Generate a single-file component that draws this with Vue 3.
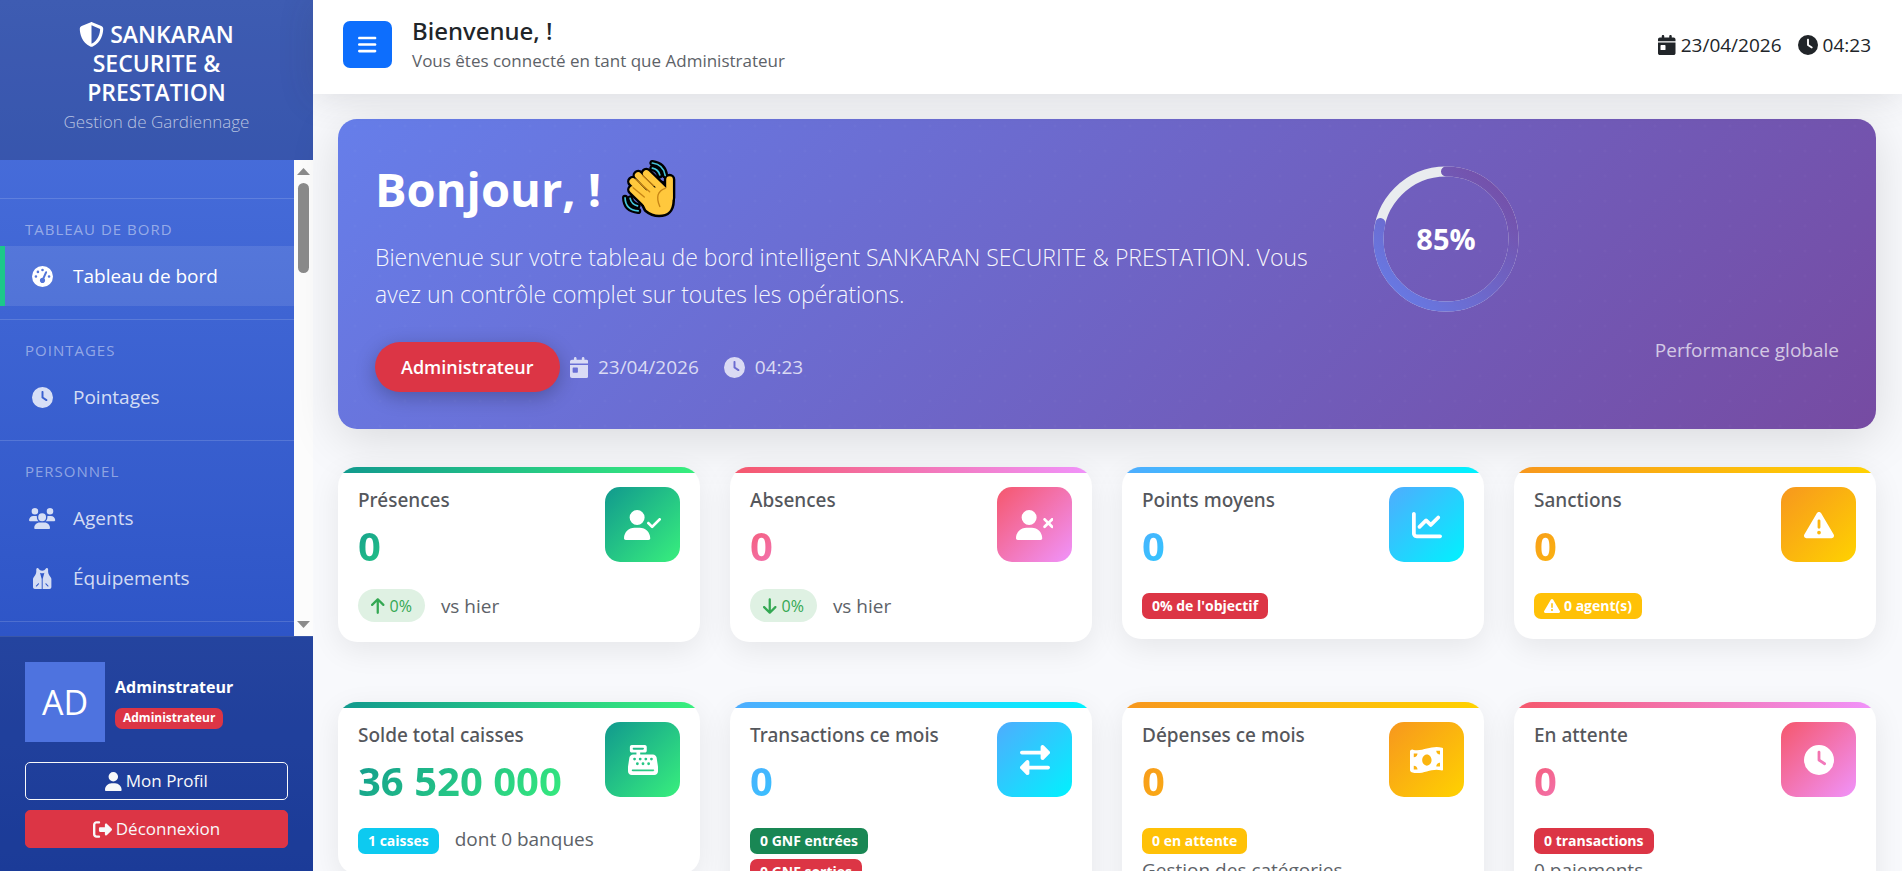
<script setup>
import { h } from 'vue'

const body = 'M96 128a128 128 0 1 1 256 0A128 128 0 1 1 96 128zM0 482.3C0 383.8 79.8 304 178.3 304h91.4C368.2 304 448 383.8 448 482.3c0 16.4-13.3 29.7-29.7 29.7H29.7C13.3 512 0 498.7 0 482.3z'
const dot = (x, y, r) => `M${x - r} ${y}a${r} ${r} 0 1 0 ${2 * r} 0a${r} ${r} 0 1 0 ${-2 * r} 0z`

const icons = {
  shield: [512, 'M256 0c4.6 0 9.2 1 13.4 2.9L457.7 82.8c22 9.3 38.4 31 38.3 57.2c-.5 99.2-41.3 280.7-213.6 363.2c-16.7 8-36.1 8-52.8 0C57.3 420.7 16.5 239.2 16 140c-.1-26.2 16.3-47.9 38.3-57.2L242.7 2.9C246.8 1 251.4 0 256 0zm0 66.8V444.8C394 378 431.1 230.1 432 141.4L256 66.8z'],
  gauge: [512, 'M0 256a256 256 0 1 1 512 0A256 256 0 1 1 0 256zM288 96a32 32 0 1 0 -64 0 32 32 0 1 0 64 0zM256 416c35.3 0 64-28.7 64-64c0-17.4-6.9-33.1-18.1-44.6L366 161.7c5.3-12.1-.2-26.3-12.3-31.6s-26.3 .2-31.6 12.3L257.9 288c-.6 0-1.3 0-1.9 0c-35.3 0-64 28.7-64 64s28.7 64 64 64zM176 144a32 32 0 1 0 -64 0 32 32 0 1 0 64 0zM96 288a32 32 0 1 0 0-64 32 32 0 1 0 0 64zm352-32a32 32 0 1 0 -64 0 32 32 0 1 0 64 0z'],
  clock: [512, 'M256 0a256 256 0 1 1 0 512A256 256 0 1 1 256 0zM232 120V256c0 8 4 15.5 10.7 20l96 64c11 7.4 25.9 4.4 33.3-6.7s4.4-25.9-6.7-33.3L280 243.2V120c0-13.3-10.7-24-24-24s-24 10.7-24 24z'],
  users: [640, 'M144 0a80 80 0 1 1 0 160A80 80 0 1 1 144 0zM512 0a80 80 0 1 1 0 160A80 80 0 1 1 512 0zM0 298.7C0 239.8 47.8 192 106.7 192h42.7c15.9 0 31 3.5 44.6 9.7c-1.3 7.2-1.9 14.7-1.9 22.3c0 38.2 16.8 72.5 43.3 96c-.2 0-.4 0-.7 0H21.3C9.6 320 0 310.4 0 298.7zM405.3 320c-.2 0-.4 0-.7 0c26.6-23.5 43.3-57.8 43.3-96c0-7.6-.7-15-1.9-22.3c13.6-6.3 28.7-9.7 44.6-9.7h42.7C592.2 192 640 239.8 640 298.7c0 11.8-9.6 21.3-21.3 21.3H405.3zM224 224a96 96 0 1 1 192 0 96 96 0 1 1 -192 0zM128 485.3C128 411.7 187.7 352 261.3 352H378.7C452.3 352 512 411.7 512 485.3c0 14.7-11.9 26.7-26.7 26.7H154.7c-14.7 0-26.7-11.9-26.7-26.7z'],
  vest: [448, 'M112 0c12 0 20 6 26 16c18 30 48 48 86 48s68-18 86-48c6-10 14-16 26-16c18 0 32 14 32 32v62c0 28 8 52 24 76l46 70c7 10 10 20 10 32v192c0 27-21 48-48 48H236V270l42-156c-16 9-34 14-54 14s-38-5-54-14l42 156v242H48c-27 0-48-21-48-48V272c0-12 3-22 10-32l46-70c16-24 24-48 24-76V32c0-18 14-32 32-32zM124 378l-52 52c-12 12 6 30 18 18l52-52c12-12-6-30-18-18zM324 378c-12-12-30 6-18 18l52 52c12 12 30-6 18-18z'],
  user: [448, 'M224 256A128 128 0 1 0 224 0a128 128 0 1 0 0 256zm-45.7 48C79.8 304 0 383.8 0 482.3C0 498.7 13.3 512 29.7 512H418.3c16.4 0 29.7-13.3 29.7-29.7C448 383.8 368.2 304 269.7 304H178.3z'],
  logout: [512, 'M377.9 105.9L500.7 228.7c7.2 7.2 11.3 17.1 11.3 27.3s-4.1 20.1-11.3 27.3L377.9 406.1c-6.4 6.4-15 9.9-24 9.9c-18.7 0-33.9-15.2-33.9-33.9l0-62.1-128 0c-17.7 0-32-14.3-32-32l0-64c0-17.7 14.3-32 32-32l128 0 0-62.1c0-18.7 15.2-33.9 33.9-33.9c9 0 17.6 3.6 24 9.9zM160 96L96 96c-17.7 0-32 14.3-32 32l0 256c0 17.7 14.3 32 32 32l64 0c17.7 0 32 14.3 32 32s-14.3 32-32 32l-64 0c-53 0-96-43-96-96L0 128C0 75 43 32 96 32l64 0c17.7 0 32 14.3 32 32s-14.3 32-32 32z'],
  bars: [448, 'M0 96C0 78.3 14.3 64 32 64H416c17.7 0 32 14.3 32 32s-14.3 32-32 32H32C14.3 128 0 113.7 0 96zM0 256c0-17.7 14.3-32 32-32H416c17.7 0 32 14.3 32 32s-14.3 32-32 32H32c-17.7 0-32-14.3-32-32zM448 416c0 17.7-14.3 32-32 32H32c-17.7 0-32-14.3-32-32s14.3-32 32-32H416c17.7 0 32 14.3 32 32z'],
  calendar: [448, 'M128 0c17.7 0 32 14.3 32 32V64H288V32c0-17.7 14.3-32 32-32s32 14.3 32 32V64h48c26.5 0 48 21.5 48 48v48H0V112C0 85.5 21.5 64 48 64H96V32c0-17.7 14.3-32 32-32zM0 192H448V464c0 26.5-21.5 48-48 48H48c-26.5 0-48-21.5-48-48V192zm80 64c-8.8 0-16 7.2-16 16v96c0 8.8 7.2 16 16 16h96c8.8 0 16-7.2 16-16V272c0-8.8-7.2-16-16-16H80z'],
  userCheck: [640, body + 'M625 177L497 305c-9.4 9.4-24.6 9.4-33.9 0l-64-64c-9.4-9.4-9.4-24.6 0-33.9s24.6-9.4 33.9 0l47 47L591 143c9.4-9.4 24.6-9.4 33.9 0s9.4 24.6 0 33.9z'],
  userTimes: [640, body + 'M471 143c9.4-9.4 24.6-9.4 33.9 0l47 47 47-47c9.4-9.4 24.6-9.4 33.9 0s9.4 24.6 0 33.9l-47 47 47 47c9.4 9.4 9.4 24.6 0 33.9s-24.6 9.4-33.9 0l-47-47-47 47c-9.4 9.4-24.6 9.4-33.9 0s-9.4-24.6 0-33.9l47-47-47-47c-9.4-9.4-9.4-24.6 0-33.9z'],
  chart: [512, 'M64 64c0-17.7-14.3-32-32-32S0 46.3 0 64V400c0 44.2 35.8 80 80 80H480c17.7 0 32-14.3 32-32s-14.3-32-32-32H80c-8.8 0-16-7.2-16-16V64zm406.6 86.6c12.5-12.5 12.5-32.8 0-45.3s-32.8-12.5-45.3 0L320 210.7l-57.4-57.4c-12.5-12.5-32.8-12.5-45.3 0l-112 112c-12.5 12.5-12.5 32.8 0 45.3s32.8 12.5 45.3 0L240 221.3l57.4 57.4c12.5 12.5 32.8 12.5 45.3 0l128-128z'],
  warning: [512, 'M256 32c14.2 0 27.3 7.5 34.5 19.8l216 368c7.3 12.4 7.3 27.7 .2 40.1S486.3 480 472 480H40c-14.3 0-27.6-7.7-34.7-20.1s-7-27.8 .2-40.1l216-368C228.7 39.5 241.8 32 256 32zm0 128c-13.3 0-24 10.7-24 24V296c0 13.3 10.7 24 24 24s24-10.7 24-24V184c0-13.3-10.7-24-24-24zm32 224a32 32 0 1 0 -64 0 32 32 0 1 0 64 0z'],
  register: [512, 'M64 0C46.3 0 32 14.3 32 32V96c0 17.7 14.3 32 32 32h80v32H87c-31.6 0-58.5 23.1-63.3 54.4L1.1 364.1C.4 368.8 0 373.6 0 378.4V448c0 35.3 28.7 64 64 64H448c35.3 0 64-28.7 64-64V378.4c0-4.8-.4-9.6-1.1-14.4L488.2 214.4C483.5 183.1 456.6 160 425 160H208V128h80c17.7 0 32-14.3 32-32V32c0-17.7-14.3-32-32-32H64zM96 48H256c8.8 0 16 7.2 16 16s-7.2 16-16 16H96c-8.8 0-16-7.2-16-16s7.2-16 16-16zM64 432c0-8.8 7.2-16 16-16H432c8.8 0 16 7.2 16 16s-7.2 16-16 16H80c-8.8 0-16-7.2-16-16z' + [112, 208, 304, 400].map((x) => dot(x, 240, 24)).join('') + [160, 256, 352].map((x) => dot(x, 320, 24)).join('')],
  exchange: [512, 'M32 96l320 0V32c0-12.9 7.8-24.6 19.8-29.6s25.7-2.2 34.9 6.9l96 96c6 6 9.4 14.1 9.4 22.6s-3.4 16.6-9.4 22.6l-96 96c-9.2 9.2-22.9 11.9-34.9 6.9s-19.8-16.6-19.8-29.6V160L32 160c-17.7 0-32-14.3-32-32s14.3-32 32-32zM480 352c17.7 0 32 14.3 32 32s-14.3 32-32 32H160v64c0 12.9-7.8 24.6-19.8 29.6s-25.7 2.2-34.9-6.9l-96-96c-6-6-9.4-14.1-9.4-22.6s3.4-16.6 9.4-22.6l96-96c9.2-9.2 22.9-11.9 34.9-6.9s19.8 16.6 19.8 29.6l0 64H480z'],
  money: [576, 'M0 112.5V422.3c0 18 10.1 35 27 41.3c87 32.5 174 10.3 261-11.9c79.8-20.3 159.6-40.7 239.3-18.9c23 6.3 48.7-9.5 48.7-33.4V89.7c0-18-10.1-35-27-41.3C462 15.9 375 38.1 288 60.3C208.2 80.6 128.4 100.9 48.7 79.1C25.6 72.8 0 88.6 0 112.5zM288 352c-44.2 0-80-43-80-96s35.8-96 80-96s80 43 80 96s-35.8 96-80 96zM64 352c35.3 0 64 28.7 64 64H64V352zm64-208c0 35.3-28.7 64-64 64V144h64zM512 304v64H448c0-35.3 28.7-64 64-64zM448 96h64v64c-35.3 0-64-28.7-64-64z'],
  arrowUp: [384, 'M214.6 41.4c-12.5-12.5-32.8-12.5-45.3 0l-160 160c-12.5 12.5-12.5 32.8 0 45.3s32.8 12.5 45.3 0L160 141.2V448c0 17.7 14.3 32 32 32s32-14.3 32-32V141.2L329.4 246.6c12.5 12.5 32.8 12.5 45.3 0s12.5-32.8 0-45.3l-160-160z'],
  arrowDown: [384, 'M169.4 470.6c12.5 12.5 32.8 12.5 45.3 0l160-160c12.5-12.5 12.5-32.8 0-45.3s-32.8-12.5-45.3 0L224 370.8V64c0-17.7-14.3-32-32-32s-32 14.3-32 32V370.8L54.6 265.4c-12.5-12.5-32.8-12.5-45.3 0s-12.5 32.8 0 45.3l160 160z'],
}

const Icon = ({ name }) => {
  const [width, d] = icons[name]
  return h('svg', { viewBox: `0 0 ${width} 512`, width: `${width / 512}em`, height: '1em', fill: 'currentColor', 'aria-hidden': 'true' }, [
    h('path', { d, 'fill-rule': 'evenodd' }),
  ])
}
Icon.props = ['name']

const today = '23/04/2026'
const now = '04:23'
const progress = 267

const sections = [
  { title: 'TABLEAU DE BORD', items: [{ label: 'Tableau de bord', icon: 'gauge', active: true }] },
  { title: 'POINTAGES', items: [{ label: 'Pointages', icon: 'clock' }] },
  { title: 'PERSONNEL', items: [{ label: 'Agents', icon: 'users' }, { label: 'Équipements', icon: 'vest' }] },
]

const cards = [
  { title: 'Présences', value: '0', tone: 'green', icon: 'userCheck', lines: [{ trend: '0%', icon: 'arrowUp', text: 'vs hier' }] },
  { title: 'Absences', value: '0', tone: 'pink', icon: 'userTimes', lines: [{ trend: '0%', icon: 'arrowDown', text: 'vs hier' }] },
  { title: 'Points moyens', value: '0', tone: 'blue', icon: 'chart', lines: [{ badge: "0% de l'objectif", color: 'danger' }] },
  { title: 'Sanctions', value: '0', tone: 'orange', icon: 'warning', lines: [{ badge: '0 agent(s)', color: 'warning', badgeIcon: 'warning' }] },
  { title: 'Solde total caisses', value: '36 520 000', tone: 'green', icon: 'register', lines: [{ badge: '1 caisses', color: 'info', text: 'dont 0 banques' }] },
  { title: 'Transactions ce mois', value: '0', tone: 'blue', icon: 'exchange', lines: [{ badge: '0 GNF entrées', color: 'success' }, { badge: '0 GNF sorties', color: 'danger' }] },
  { title: 'Dépenses ce mois', value: '0', tone: 'orange', icon: 'money', lines: [{ badge: '0 en attente', color: 'warning' }, { text: 'Gestion des catégories' }] },
  { title: 'En attente', value: '0', tone: 'pink', icon: 'clock', lines: [{ badge: '0 transactions', color: 'danger' }, { text: '0 paiements' }] },
]
</script>

<template>
  <div class="app">
    <aside class="sidebar">
      <header class="brand">
        <h1><Icon name="shield" /> SANKARAN SECURITE &amp; PRESTATION</h1>
        <p>Gestion de Gardiennage</p>
      </header>

      <div class="scroller">
        <nav>
          <section v-for="s in sections" :key="s.title" class="group">
            <h2>{{ s.title }}</h2>
            <a v-for="i in s.items" :key="i.label" href="#" :class="{ active: i.active }">
              <span class="nav-icon"><Icon :name="i.icon" /></span>{{ i.label }}
            </a>
          </section>
          <div class="group"></div>
        </nav>
        <div class="scrollbar" aria-hidden="true">
          <svg class="tip" viewBox="0 0 13 7"><path d="M0 7L6.500 0L13 7z" /></svg>
          <i class="thumb"></i>
          <svg class="tip" viewBox="0 0 13 7"><path d="M0 0L6.500 7L13 0z" /></svg>
        </div>
      </div>

      <footer class="account">
        <div class="who">
          <div class="avatar">AD</div>
          <div>
            <strong>Adminstrateur</strong>
            <span class="badge danger">Administrateur</span>
          </div>
        </div>
        <button type="button" class="btn outline"><Icon name="user" />Mon Profil</button>
        <button type="button" class="btn red"><Icon name="logout" />Déconnexion</button>
      </footer>
    </aside>

    <div class="content">
      <header class="topbar">
        <button type="button" class="toggle" aria-label="Menu"><Icon name="bars" /></button>
        <div class="welcome">
          <h2>Bienvenue, !</h2>
          <p>Vous êtes connecté en tant que Administrateur</p>
        </div>
        <div class="stamp">
          <span><Icon name="calendar" />{{ today }}</span>
          <span><Icon name="clock" />{{ now }}</span>
        </div>
      </header>

      <main>
        <section class="hero">
          <div class="hero-text">
            <h2>
              Bonjour, !
              <svg class="wave" viewBox="0 0 160 172" role="img" aria-label="Main qui salue" fill="none" stroke-linecap="round" stroke-linejoin="round">
                <g stroke="#000" stroke-width="18">
                  <path d="M90 9Q124 14 128 46M90 24Q108 28 112 46" />
                  <path d="M9 112Q10 148 48 151M24 114Q28 132 46 136" />
                </g>
                <g stroke="#000" stroke-width="34">
                  <path d="M72 40L118 84M48 46L104 104M32 64L90 122M32 88L84 138M141 58V112" />
                </g>
                <path d="M60 104L118 78L141 92L141 122Q140 154 110 154Q92 154 78 142Z" fill="#000" stroke="#000" stroke-width="32" />
                <g stroke="#ffc83d" stroke-width="20">
                  <path d="M72 40L118 84M48 46L104 104M32 64L90 122M32 88L84 138M141 58V112" />
                </g>
                <path d="M60 104L118 84L141 100L141 122Q140 154 110 154Q92 154 78 142Z" fill="#ffc83d" stroke="#ffc83d" stroke-width="17" />
                <path d="M61 46L93 76M40 57L82 94M33 82L66 110M128 84Q94 96 112 138" stroke="#c78414" stroke-width="4" />
                <path d="M90 9Q124 14 128 46M90 24Q108 28 112 44M9 112Q10 148 48 151M24 114Q28 132 46 136" stroke="#45c5da" stroke-width="5" />
              </svg>
            </h2>
            <p>Bienvenue sur votre tableau de bord intelligent SANKARAN SECURITE &amp; PRESTATION. Vous avez un contrôle complet sur toutes les opérations.</p>
            <div class="meta">
              <span class="role">Administrateur</span>
              <span><Icon name="calendar" />{{ today }}</span>
              <span><Icon name="clock" />{{ now }}</span>
            </div>
          </div>
          <div class="hero-side">
            <div class="ring">
              <svg viewBox="0 0 120 120" fill="none">
                <defs>
                  <linearGradient id="ringStroke" x1="0%" y1="0%" x2="100%" y2="100%">
                    <stop offset="0%" stop-color="#667eea" />
                    <stop offset="100%" stop-color="#764ba2" />
                  </linearGradient>
                </defs>
                <g transform="rotate(-90 60 60)" stroke-width="8">
                  <circle cx="60" cy="60" r="54" stroke="#e9ecef" />
                  <circle cx="60" cy="60" r="54" stroke="url(#ringStroke)" stroke-linecap="round" :stroke-dasharray="`${progress} 1000`" />
                </g>
              </svg>
              <strong>85%</strong>
            </div>
            <p>Performance globale</p>
          </div>
        </section>

        <section class="cards">
          <article v-for="c in cards" :key="c.title" class="card" :class="c.tone">
            <div class="card-head">
              <div>
                <h3>{{ c.title }}</h3>
                <div class="value">{{ c.value }}</div>
              </div>
              <div class="tile"><Icon :name="c.icon" /></div>
            </div>
            <div v-for="(l, n) in c.lines" :key="n" class="line">
              <span v-if="l.trend" class="trend"><Icon :name="l.icon" />{{ l.trend }}</span>
              <span v-if="l.badge" class="badge" :class="l.color"><Icon v-if="l.badgeIcon" :name="l.badgeIcon" />{{ l.badge }}</span>
              <span v-if="l.text">{{ l.text }}</span>
            </div>
          </article>
        </section>
      </main>
    </div>
  </div>
</template>

<style>
body {
  margin: 0;
  background: #f8f9fc;
}
</style>

<style scoped>
.app,
.app * {
  box-sizing: border-box;
}
.app {
  display: flex;
  height: 100vh;
  overflow: hidden;
  font-family: "Open Sans", "Noto Sans", sans-serif;
  font-size: 19px;
  line-height: 30px;
  color: #212529;
}
h1, h2, h3, p {
  margin: 0;
}
button {
  font: inherit;
  cursor: pointer;
}
svg {
  flex: none;
}

/* Sidebar */
.sidebar {
  flex: none;
  display: flex;
  flex-direction: column;
  width: 313px;
  color: #fff;
  background: linear-gradient(180deg, #4e73df 0%, #224abe 100%);
}
.brand {
  height: 160px;
  padding: 20px 50px;
  text-align: center;
  background: rgba(0, 0, 0, 0.2);
}
.brand h1 {
  font-size: 23px;
  line-height: 29px;
  font-weight: 600;
}
.brand h1 svg {
  font-size: 25px;
  vertical-align: -4px;
}
.brand p {
  margin: 0 -20px;
  font-size: 17px;
  line-height: 30px;
  font-weight: 300;
  color: rgba(255, 255, 255, 0.65);
}
.scroller {
  flex: 1;
  display: flex;
  min-height: 0;
}
nav {
  flex: 1;
  padding-top: 38px;
  overflow: hidden;
}
.group {
  padding-bottom: 13px;
  border-top: 1px solid rgba(255, 255, 255, 0.15);
}
.group h2 {
  height: 47px;
  padding: 18px 25px 0;
  font-size: 15px;
  line-height: 24px;
  font-weight: 400;
  letter-spacing: 1px;
  color: rgba(255, 255, 255, 0.45);
}
.group a {
  display: flex;
  align-items: center;
  height: 60px;
  padding-left: 20px;
  border-left: 5px solid transparent;
  color: rgba(255, 255, 255, 0.8);
  text-decoration: none;
}
.group a.active {
  color: #fff;
  background: rgba(255, 255, 255, 0.1);
  border-left-color: #1cc88a;
}
.nav-icon {
  display: flex;
  justify-content: center;
  width: 35px;
  margin-right: 13px;
  font-size: 21px;
}
.scrollbar {
  display: flex;
  flex-direction: column;
  align-items: center;
  width: 19px;
  padding: 8px 0;
  background: #fcfcfc;
}
.tip {
  width: 13px;
  height: 7px;
  fill: #8b8b8b;
}
.thumb {
  width: 11px;
  height: 90px;
  margin: 8px 0 auto;
  border-radius: 6px;
  background: #8b8b8b;
}
.account {
  display: flex;
  flex-direction: column;
  gap: 10px;
  padding: 25px 25px 23px;
  border-top: 1px solid rgba(255, 255, 255, 0.1);
  background: rgba(0, 0, 0, 0.2);
}
.who {
  display: flex;
  align-items: center;
  gap: 10px;
  margin-bottom: 10px;
}
.who strong {
  display: block;
  font-size: 16px;
  line-height: 26px;
}
.who .badge {
  height: 21px;
  padding: 0 8px;
  font-size: 12px;
}
.avatar {
  display: flex;
  align-items: center;
  justify-content: center;
  width: 80px;
  height: 80px;
  font-size: 34px;
  background: #4e73df;
}
.btn {
  display: flex;
  align-items: center;
  justify-content: center;
  gap: 4px;
  height: 38px;
  border: 1px solid #f8f9fa;
  border-radius: 5px;
  font-size: 17px;
  color: #f8f9fa;
  background: none;
}
.btn svg {
  font-size: 19px;
}
.btn.red {
  border-color: #dc3545;
  background: #dc3545;
}

/* Top bar */
.content {
  flex: 1;
  min-width: 0;
}
.topbar {
  position: relative;
  display: flex;
  align-items: center;
  height: 94px;
  padding: 0 31px 5px 30px;
  background: #fff;
  box-shadow: 0 3px 35px rgba(58, 59, 69, 0.15);
}
.toggle {
  display: flex;
  align-items: center;
  justify-content: center;
  width: 49px;
  height: 47px;
  border: 0;
  border-radius: 7px;
  font-size: 21px;
  color: #fff;
  background: #0d6efd;
}
.welcome {
  flex: 1;
  margin-left: 20px;
}
.welcome h2 {
  font-family: "Noto Sans", "Open Sans", sans-serif;
  font-size: 24px;
  line-height: 31px;
  font-weight: 500;
}
.welcome p {
  font-size: 17px;
  line-height: 29px;
  color: #5d6268;
}
.stamp {
  display: flex;
  gap: 16px;
}
.stamp span {
  display: flex;
  align-items: center;
  gap: 5px;
}
.stamp svg {
  font-size: 20px;
}

/* Hero */
main {
  padding: 25px 26px 0 25px;
}
.hero {
  display: flex;
  height: 310px;
  padding: 37px;
  border-radius: 19px;
  color: #fff;
  background:
    radial-gradient(circle at 17px 7px, rgba(255, 255, 255, 0.02) 1px, transparent 2px) 0 0 / 25px 25px,
    linear-gradient(135deg, #667eea 0%, #764ba2 100%);
  box-shadow: 0 10px 50px rgba(0, 0, 0, 0.13);
}
.hero-text {
  flex: 1;
}
.hero-text h2 {
  display: flex;
  align-items: center;
  gap: 21px;
  height: 66px;
  font-size: 47px;
  line-height: 66px;
  font-weight: 700;
}
.wave {
  width: 54px;
  height: 58px;
}
.hero-text p {
  margin-top: 17px;
  font-size: 23px;
  line-height: 37px;
  font-weight: 300;
  color: rgba(255, 255, 255, 0.95);
}
.meta {
  display: flex;
  align-items: center;
  gap: 25px;
  margin-top: 29px;
  color: rgba(255, 255, 255, 0.75);
}
.meta span {
  display: flex;
  align-items: center;
  gap: 10px;
}
.meta svg {
  font-size: 21px;
}
.meta .role {
  height: 50px;
  padding: 0 26px;
  margin-right: -15px;
  border-radius: 25px;
  font-size: 18px;
  font-weight: 600;
  color: #fff;
  background: #dc3545;
  box-shadow: 0 5px 19px rgba(0, 0, 0, 0.25);
}
.hero-side {
  flex: none;
  width: 33.333%;
  padding: 8px 0 0 20px;
}
.ring {
  display: grid;
  place-items: center;
  width: 150px;
  height: 150px;
}
.ring > * {
  grid-area: 1 / 1;
}
.ring svg {
  width: 150px;
  height: 150px;
}
.ring strong {
  font-size: 29px;
}
.hero-side p {
  margin-top: 21px;
  text-align: right;
  color: rgba(255, 255, 255, 0.7);
}

/* Statistic cards */
.cards {
  display: grid;
  grid-template-columns: repeat(4, 1fr);
  grid-template-rows: 175px auto;
  gap: 60px 30px;
  align-items: start;
  margin-top: 38px;
}
.card {
  --from: #11998e;
  --to: #38ef7d;
  padding: 20px;
  border-radius: 19px;
  background: linear-gradient(90deg, var(--from), var(--to)) top / 100% 6px no-repeat #fff;
  box-shadow: 0 8px 30px rgba(0, 0, 0, 0.08);
}
.card.pink {
  --from: #f5576c;
  --to: #f093fb;
}
.card.blue {
  --from: #4facfe;
  --to: #00f2fe;
}
.card.orange {
  --from: #f7971e;
  --to: #ffd200;
}
.card-head {
  display: flex;
  justify-content: space-between;
  height: 102px;
}
.card h3 {
  font-family: "Noto Sans", "Open Sans", sans-serif;
  font-size: 19px;
  line-height: 27px;
  font-weight: 500;
  color: #55575c;
}
.value {
  font-size: 40px;
  line-height: 64px;
  font-weight: 700;
  color: transparent;
  background: linear-gradient(135deg, var(--from), var(--to));
  background-clip: text;
}
.tile {
  display: flex;
  align-items: center;
  justify-content: center;
  width: 75px;
  height: 75px;
  border-radius: 15px;
  font-size: 30px;
  color: #fff;
  background: linear-gradient(135deg, var(--from), var(--to));
}
.line {
  display: flex;
  align-items: flex-end;
  gap: 16px;
  color: #5d6268;
}
.line + .line {
  margin-top: 1px;
}
.trend {
  display: flex;
  align-items: center;
  gap: 5px;
  height: 33px;
  padding: 0 13px;
  border-radius: 17px;
  font-size: 16px;
  color: #34a853;
  background: #dff1e3;
}
.trend svg {
  font-size: 18px;
}
.trend + span {
  align-self: center;
}
.badge {
  display: inline-flex;
  align-items: center;
  gap: 4px;
  height: 26px;
  padding: 0 10px;
  margin-top: 4px;
  border-radius: 7px;
  font-size: 14px;
  line-height: 20px;
  font-weight: 700;
  color: #fff;
}
.badge svg {
  font-size: 16px;
}
.who .badge {
  margin-top: 0;
}
.danger {
  background: #dc3545;
}
.warning {
  background: #ffc107;
}
.info {
  background: #0dcaf0;
}
.success {
  background: #198754;
}
</style>
